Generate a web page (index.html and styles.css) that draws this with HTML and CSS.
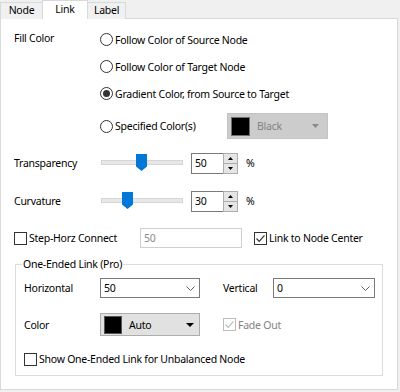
FILE: index.html
```html
<!DOCTYPE html>
<html>
<head>
<meta charset="utf-8">
<link rel="stylesheet" href="styles.css">
</head>
<body>
<div class="tabs">
  <div class="tab tab-node">Node</div>
  <div class="tab tab-link active">Link</div>
  <div class="tab tab-label">Label</div>
</div>
<div class="panel">
  <div class="fill">
    <div class="lbl fill-lbl">Fill Color</div>
    <div class="radios">
      <div class="radio-row"><span class="radio"></span><span>Follow Color of Source Node</span></div>
      <div class="radio-row"><span class="radio"></span><span>Follow Color of Target Node</span></div>
      <div class="radio-row"><span class="radio checked"></span><span>Gradient Color, from Source to Target</span></div>
      <div class="radio-row spec">
        <span class="radio"></span><span class="spec-text">Specified Color(s)</span>
        <div class="colorsel">
          <span class="swatch swatch-dis"></span>
          <span class="colorsel-text">Black</span>
          <svg class="tri" width="7" height="4" viewBox="0 0 7 4"><path d="M0 0H7L3.5 4Z" fill="#8a8a8a"/></svg>
        </div>
      </div>
    </div>
  </div>

  <div class="srow srow-trans">
    <div class="lbl slbl">Transparency</div>
    <svg class="slider" width="84" height="20" viewBox="0 0 84 20">
      <rect x="1.5" y="6.5" width="81" height="4" fill="#e7e7e7" stroke="#d6d6d6"/>
      <path d="M36 0H47V12.5L41.5 17L36 12.5Z" fill="#0078d7"/>
    </svg>
    <div class="spin">
      <div class="spin-input">50</div>
      <div class="spin-btns">
        <div class="sb"><svg width="5" height="3" viewBox="0 0 5 3"><path d="M2.5 0L5 3H0Z" fill="#000"/></svg></div>
        <div class="sb"><svg width="5" height="3" viewBox="0 0 5 3"><path d="M0 0H5L2.5 3Z" fill="#000"/></svg></div>
      </div>
    </div>
    <span class="pct">%</span>
  </div>

  <div class="srow srow-curv">
    <div class="lbl slbl">Curvature</div>
    <svg class="slider" width="84" height="20" viewBox="0 0 84 20">
      <rect x="1.5" y="6.5" width="81" height="4" fill="#e7e7e7" stroke="#d6d6d6"/>
      <path d="M22 0H33V12.5L27.5 17L22 12.5Z" fill="#0078d7"/>
    </svg>
    <div class="spin">
      <div class="spin-input">30</div>
      <div class="spin-btns">
        <div class="sb"><svg width="5" height="3" viewBox="0 0 5 3"><path d="M2.5 0L5 3H0Z" fill="#000"/></svg></div>
        <div class="sb"><svg width="5" height="3" viewBox="0 0 5 3"><path d="M0 0H5L2.5 3Z" fill="#000"/></svg></div>
      </div>
    </div>
    <span class="pct">%</span>
  </div>

  <div class="step-row">
    <div class="chk-wrap step-chk"><span class="chk"></span><span>Step-Horz Connect</span></div>
    <div class="dis-input">50</div>
    <div class="chk-wrap center-chk">
      <span class="chk"><svg width="11" height="11" viewBox="0 0 11 11"><path d="M1.5 5.5L4.2 8.3L9.5 2.3" fill="none" stroke="#333" stroke-width="1.2"/></svg></span>
      <span>Link to Node Center</span>
    </div>
  </div>

  <fieldset class="group">
    <legend>One-Ended Link (Pro)</legend>
    <div class="grow grow-1">
      <div class="lbl glbl">Horizontal</div>
      <div class="dd">
        <span>50</span>
        <svg width="9" height="5" viewBox="0 0 9 5"><path d="M0.5 0.5L4.5 4.5L8.5 0.5" fill="none" stroke="#606060" stroke-width="1"/></svg>
      </div>
      <div></div>
      <div class="lbl glbl">Vertical</div>
      <div class="dd">
        <span>0</span>
        <svg width="9" height="5" viewBox="0 0 9 5"><path d="M0.5 0.5L4.5 4.5L8.5 0.5" fill="none" stroke="#606060" stroke-width="1"/></svg>
      </div>
    </div>
    <div class="grow grow-2">
      <div class="lbl glbl">Color</div>
      <div class="colorbtn">
        <span class="swatch"></span>
        <span class="colorbtn-text">Auto</span>
        <svg class="tri-b" width="8" height="4" viewBox="0 0 8 4"><path d="M0 0H8L4 4Z" fill="#000"/></svg>
      </div>
      <div></div>
      <div class="chk-wrap fade-chk">
        <span class="chk chk-dis"><svg width="11" height="11" viewBox="0 0 11 11"><path d="M1.5 5.5L4.2 8.3L9.5 2.3" fill="none" stroke="#bcbcbc" stroke-width="1.2"/></svg></span>
        <span>Fade Out</span>
      </div>
    </div>
    <div class="chk-wrap show-chk"><span class="chk"></span><span>Show One-Ended Link for Unbalanced Node</span></div>
  </fieldset>
</div>
</body>
</html>
```

FILE: styles.css
```css
html, body {
  margin: 0;
  padding: 0;
}
body {
  background: #f0f0f0;
  font-family: "Noto Sans", sans-serif;
  font-size: 10.5px;
  letter-spacing: -0.25px;
  color: #000;
  width: 400px;
  height: 392px;
  overflow: hidden;
}

/* Tabs */
.tabs {
  display: flex;
  align-items: flex-end;
  height: 19px;
}
.tab {
  box-sizing: border-box;
  height: 17px;
  border: 1px solid #d9d9d9;
  border-bottom: none;
  background: #f0f0f0;
  text-align: center;
  line-height: 15px;
  margin-left: -1px;
  color: #000;
}
.tab-node { width: 43px; margin-left: 0; }
.tab-link { width: 46px; }
.tab-label { width: 39px; }
.tab.active {
  position: relative;
  z-index: 1;
  height: 19px;
  background: #fff;
  line-height: 16px;
}

/* Panel */
.panel {
  box-sizing: border-box;
  width: 398px;
  height: 372px;
  margin-top: -1px;
  border: 1px solid #d9d9d9;
  background: #fff;
  padding: 7px 0 0 13px;
}

.lbl {
  color: #000;
  white-space: nowrap;
}

/* Fill color */
.fill {
  display: flex;
}
.fill-lbl {
  width: 86px;
  line-height: 24px;
  flex: none;
}
.radios {
  display: flex;
  flex-direction: column;
}
.radio-row {
  display: flex;
  align-items: center;
  height: 27px;
  white-space: nowrap;
}
.radio {
  box-sizing: border-box;
  width: 13px;
  height: 13px;
  border: 1px solid #333;
  border-radius: 50%;
  background: #fff;
  margin-right: 2px;
  display: flex;
  align-items: center;
  justify-content: center;
  flex: none;
}
.radio.checked::after {
  content: "";
  width: 7px;
  height: 7px;
  border-radius: 50%;
  background: #333;
}
.radio-row.spec {
  height: 26px;
  margin-top: 6px;
}
.spec-text {
  width: 112px;
}
.colorsel {
  box-sizing: border-box;
  width: 101px;
  height: 26px;
  background: #cccccc;
  border: 1px solid #c4c4c4;
  display: flex;
  align-items: center;
  padding-left: 3px;
}
.swatch {
  box-sizing: border-box;
  width: 19px;
  height: 19px;
  background: #000;
  border: 1px solid #6e6e6e;
  flex: none;
}
.colorsel-text {
  color: #838383;
  margin-left: 7px;
  flex: 1;
}
.tri {
  margin-right: 8px;
}

/* Slider rows */
.srow {
  display: flex;
  align-items: center;
  height: 20px;
}
.srow-trans { margin-top: 14px; }
.srow-curv { margin-top: 18px; }
.slbl {
  width: 86px;
  flex: none;
}
.slider {
  display: block;
  flex: none;
  margin-top: 1px;
}
.spin {
  display: flex;
  margin-left: 7px;
  height: 21px;
}
.spin-input {
  box-sizing: border-box;
  width: 33px;
  height: 21px;
  border: 1px solid #7a7a7a;
  background: #fff;
  padding-left: 3px;
  line-height: 19px;
}
.spin-btns {
  display: flex;
  flex-direction: column;
  margin-left: -1px;
}
.sb {
  box-sizing: border-box;
  width: 15px;
  height: 11px;
  border: 1px solid #adadad;
  background: #e5e5e5;
  display: flex;
  align-items: center;
  justify-content: center;
}
.sb + .sb {
  margin-top: -1px;
}
.sb svg { display: block; }
.pct {
  margin-left: 8px;
}

/* Step row */
.step-row {
  display: flex;
  align-items: center;
  height: 20px;
  margin-top: 17px;
}
.chk-wrap {
  display: flex;
  align-items: center;
  white-space: nowrap;
}
.chk {
  box-sizing: border-box;
  width: 13px;
  height: 13px;
  border: 1px solid #333;
  background: #fff;
  margin-right: 2px;
  display: flex;
  align-items: center;
  justify-content: center;
  flex: none;
}
.chk svg { display: block; }
.chk-dis {
  border-color: #bcbcbc;
}
.step-chk {
  width: 126px;
}
.dis-input {
  box-sizing: border-box;
  width: 102px;
  height: 20px;
  border: 1px solid #cfcfcf;
  background: #fff;
  color: #8a8a8a;
  line-height: 18px;
  padding-left: 3px;
}
.center-chk {
  margin-left: 12px;
}

/* Group */
.group {
  box-sizing: border-box;
  width: 368px;
  margin: 8px 0 0 1px;
  border: 1px solid #dcdcdc;
  padding: 0 7px 8px 8px;
  min-width: 0;
}
.group legend {
  padding: 0 1px;
  margin-left: -2px;
  line-height: 16px;
}
.grow {
  display: grid;
  grid-template-columns: 76px 100px 23px 50px 102px;
  align-items: center;
}
.grow-1 {
  margin-top: 6px;
  height: 20px;
}
.grow-2 {
  margin-top: 15px;
  height: 23px;
}
.dd {
  box-sizing: border-box;
  height: 20px;
  border: 1px solid #7a7a7a;
  background: #fff;
  display: flex;
  align-items: center;
  justify-content: space-between;
  padding: 0 3px 0 3px;
}
.dd svg { display: block; margin-right: 1px; }
.colorbtn {
  box-sizing: border-box;
  height: 23px;
  border: 1px solid #adadad;
  background: #e1e1e1;
  display: flex;
  align-items: center;
  padding-left: 3px;
}
.colorbtn .swatch {
  width: 18px;
  height: 18px;
  border-color: #555;
}
.colorbtn-text {
  margin-left: 7px;
  flex: 1;
}
.tri-b {
  margin-right: 5px;
}
.fade-chk {
  color: #838383;
}
.show-chk {
  margin-top: 15px;
  height: 16px;
}
```
